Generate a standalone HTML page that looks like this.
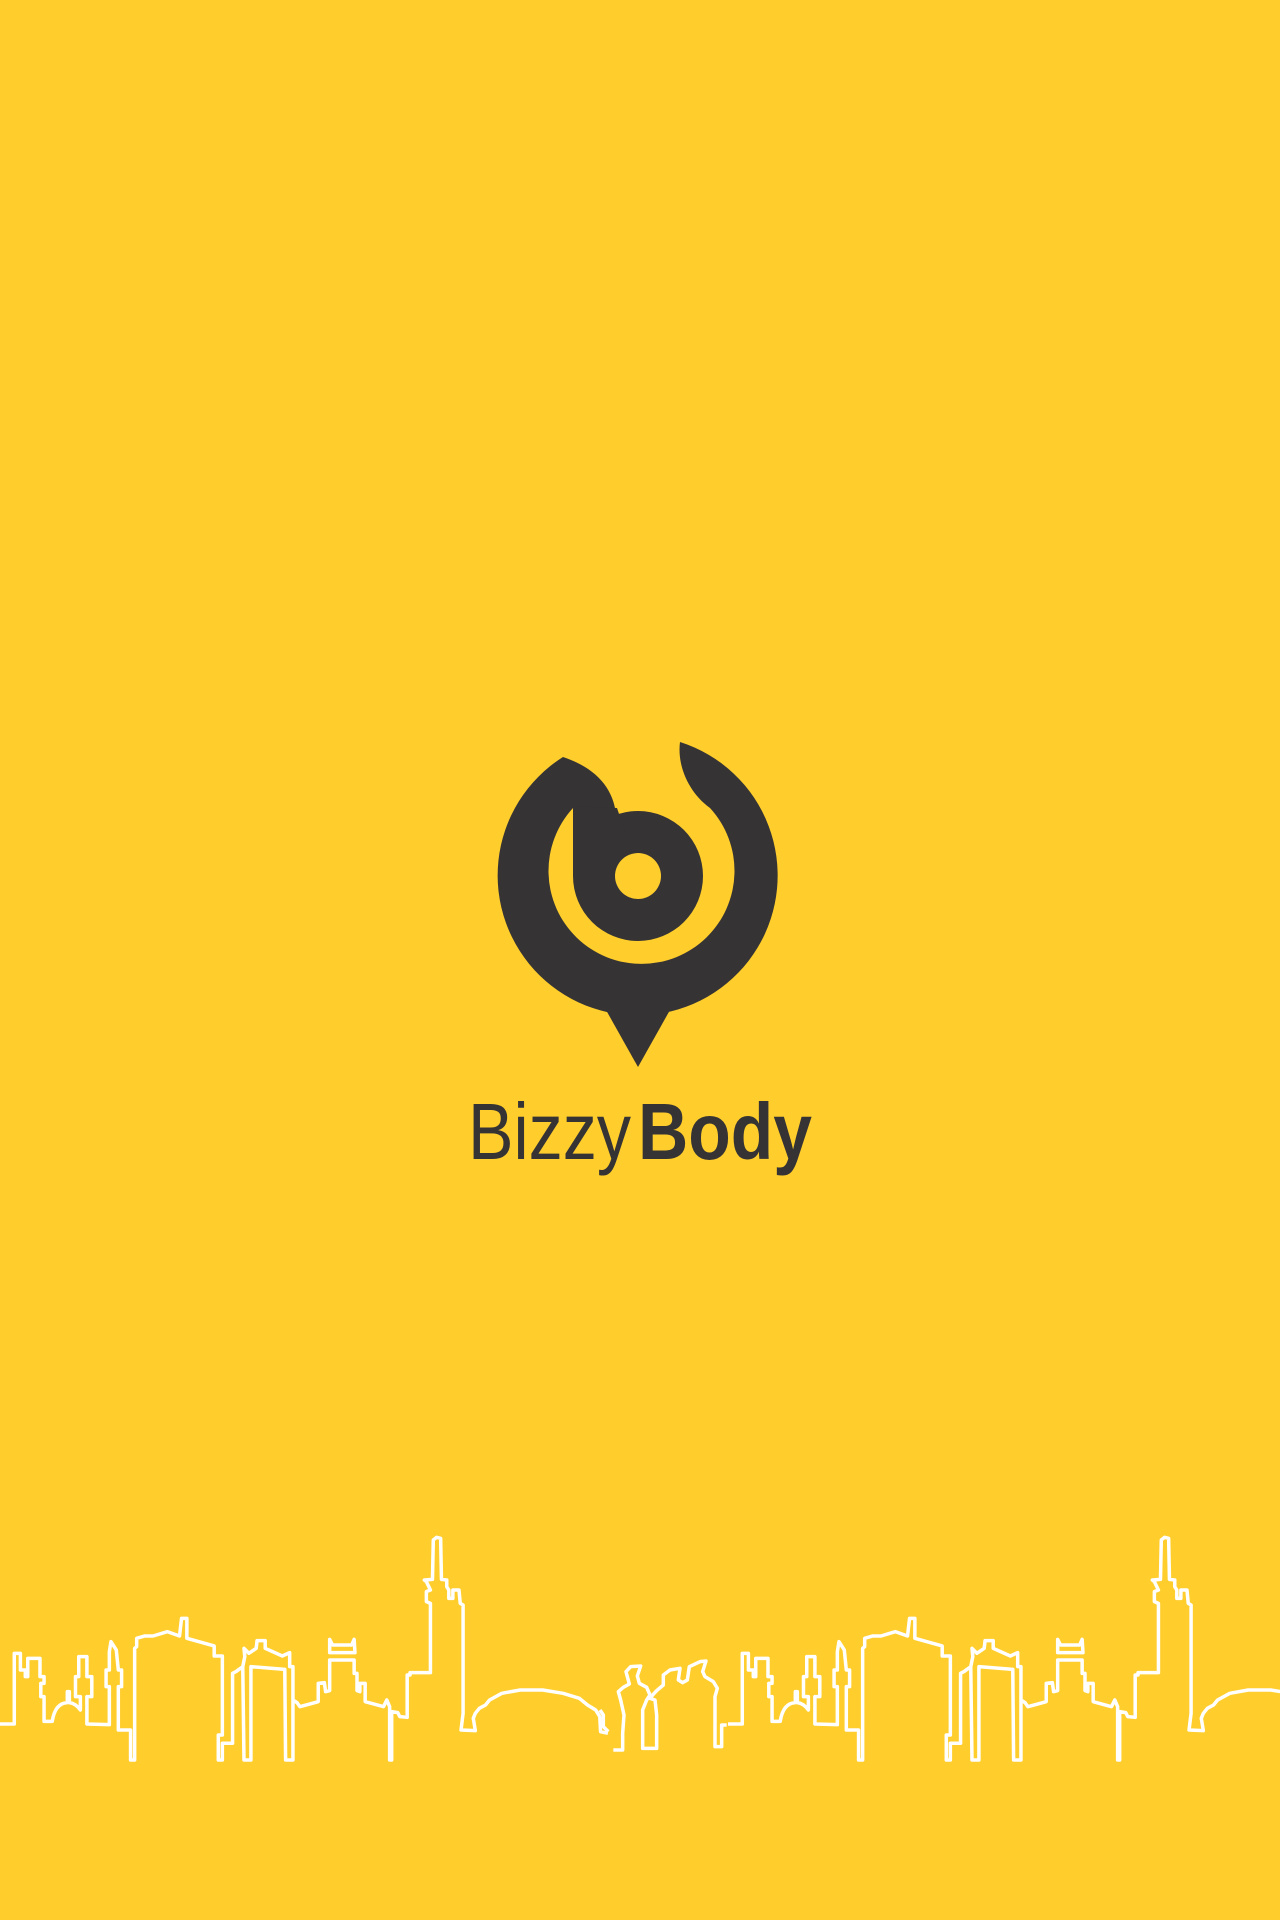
<!DOCTYPE html>
<html><head><meta charset="utf-8"><style>
html,body{margin:0;padding:0;background:#FFCD2C;}
svg{display:block}
</style></head><body>
<svg width="1280" height="1920" viewBox="0 0 1280 1920" xmlns="http://www.w3.org/2000/svg">
<rect width="1280" height="1920" fill="#FFCD2C"/>
<g fill="#353334">
  <path d="M563,757 A140,140 0 1 0 680,742 C677,765 688,792 710,808 A93,93 0 1 1 573,808 L616,814 C613,788 596,768 563,757 Z"/>
  <circle cx="638" cy="876" r="65"/>
  <polygon points="573,806 617,808 640,876 573,876"/>
  <polygon points="606,1010 670,1010 638,1067"/>
</g>
<circle cx="638" cy="876" r="23" fill="#FFCD2C"/>
<text x="468" y="1159" font-family="Liberation Sans, sans-serif" font-size="80" fill="#353334" textLength="163" lengthAdjust="spacingAndGlyphs">Bizzy</text>
<text x="638" y="1159" font-family="Liberation Sans, sans-serif" font-size="80" font-weight="bold" fill="#353334" textLength="174" lengthAdjust="spacingAndGlyphs">Body</text>
<defs>
<g id="sky" fill="none" stroke="#fff" stroke-width="3.5" stroke-linejoin="round">
  <g transform="translate(0,1520) scale(0.408,0.3333)">
    <path vector-effect="non-scaling-stroke" d="M0,612 L35,612 35,400 50,400 50,450 62,450 62,470 68,470 68,415 98,415 98,470 108,470 108,490 100,490 100,530 108,530 108,604 128,604 Q135,550 165,548 L165,515 170,515 170,548 Q185,550 197,570 L197,530 185,530 185,470 193,470 193,410 213,410 213,470 225,470 225,530 213,530 213,612 268,614 268,500 260,500 260,450 268,450 268,395 272,365 285,390 290,450 298,450 298,500 290,500 290,630 320,630 320,720 330,720 330,385 335,380 335,355 355,348 375,348 410,335 440,348 445,295 458,295 458,355 525,378 525,408 545,408 545,645 535,645 535,720 545,720 545,670 570,670 570,460 578,455 595,440 598,720 615,720 615,440 698,448 700,720 718,720 718,440 710,440 710,398 692,408 650,385 650,362 630,362 628,385 610,400 598,385 600,410 595,440 M718,540 L728,548 735,560 780,545 780,490 795,488 798,515 808,512 808,420 868,420 868,460 875,460 875,512 882,515 882,490 895,490 895,545 940,560 948,540 955,560 955,720 960,720 960,575 975,578 980,590 998,592 998,465 1005,465 1005,458 1055,458 1055,250 1045,245 1045,215 1055,210 1045,185 1040,180 1060,178 1062,60 1070,52 1080,55 1082,178 1095,180 1095,200 1100,210 1100,235 1110,235 1110,210 1125,210 1128,250 1135,255 1135,580 1130,630 1165,632 1160,595 1165,580 1175,565 1190,555 1200,540 1230,520 1275,510 1330,510 1380,520 1420,535 1440,555 1460,570 1470,590 1472,635 1490,640 M808,358 L815,375 862,375 868,358 870,398 808,398 Z"/>
  </g>
  <g transform="translate(600,1600) scale(0.3333)">
    <path vector-effect="non-scaling-stroke" d="M0,330 L10,345 10,380 25,395 M40,450 L68,450 68,400 72,345 62,300 55,275 70,262 88,252 78,215 92,200 122,198 112,228 118,250 140,262 150,285 140,300 128,330 128,445 170,445 170,345 165,300 150,295 158,285 170,272 190,255 190,225 210,210 240,205 235,240 248,248 262,240 268,200 300,185 318,183 308,215 315,230 340,245 352,265 345,290 345,440 365,440 365,375 380,375"/>
  </g>
</g>
</defs>
<use href="#sky"/>
<use href="#sky" transform="translate(728,0)"/>
</svg>
</body></html>
